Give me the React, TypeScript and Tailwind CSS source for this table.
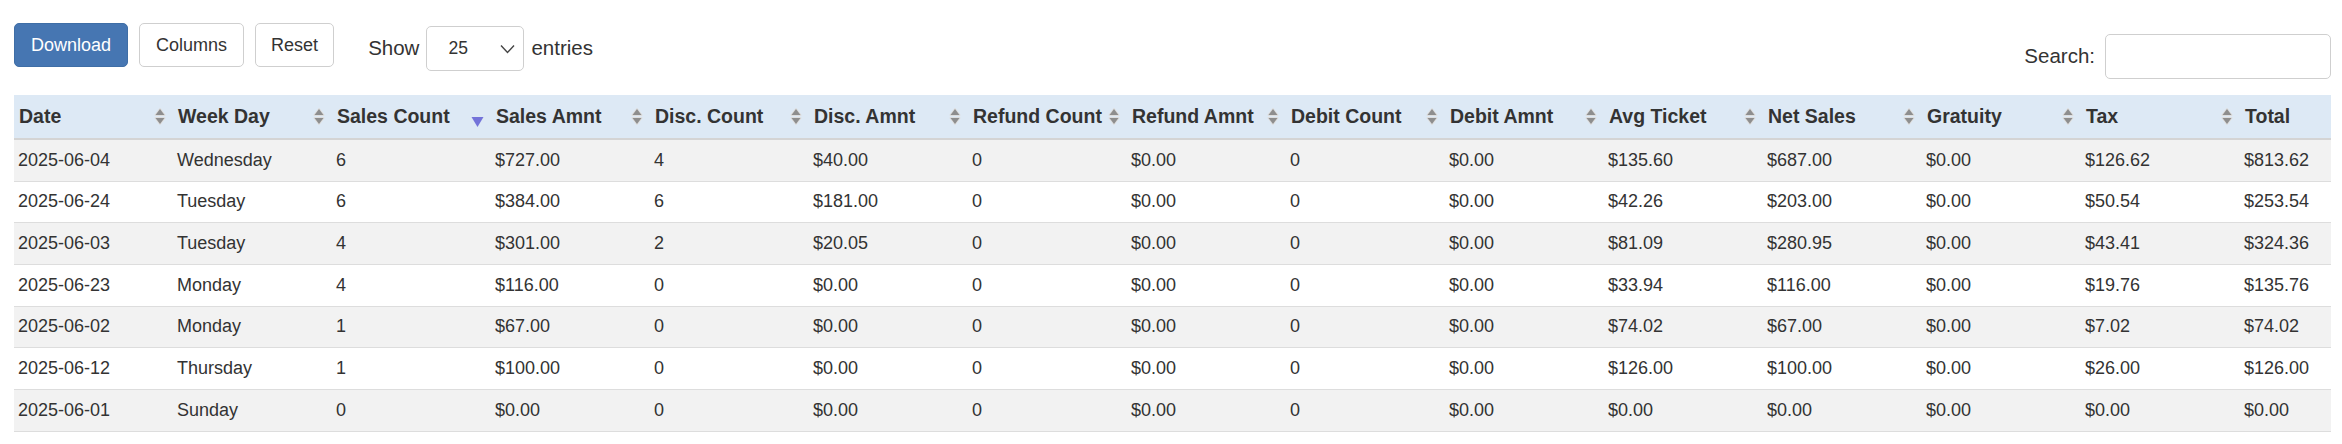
import React from "react";

const columns = [
  "Date",
  "Week Day",
  "Sales Count",
  "Sales Amnt",
  "Disc. Count",
  "Disc. Amnt",
  "Refund Count",
  "Refund Amnt",
  "Debit Count",
  "Debit Amnt",
  "Avg Ticket",
  "Net Sales",
  "Gratuity",
  "Tax",
  "Total",
];

const rows = [
  ["2025-06-04", "Wednesday", "6", "$727.00", "4", "$40.00", "0", "$0.00", "0", "$0.00", "$135.60", "$687.00", "$0.00", "$126.62", "$813.62"],
  ["2025-06-24", "Tuesday", "6", "$384.00", "6", "$181.00", "0", "$0.00", "0", "$0.00", "$42.26", "$203.00", "$0.00", "$50.54", "$253.54"],
  ["2025-06-03", "Tuesday", "4", "$301.00", "2", "$20.05", "0", "$0.00", "0", "$0.00", "$81.09", "$280.95", "$0.00", "$43.41", "$324.36"],
  ["2025-06-23", "Monday", "4", "$116.00", "0", "$0.00", "0", "$0.00", "0", "$0.00", "$33.94", "$116.00", "$0.00", "$19.76", "$135.76"],
  ["2025-06-02", "Monday", "1", "$67.00", "0", "$0.00", "0", "$0.00", "0", "$0.00", "$74.02", "$67.00", "$0.00", "$7.02", "$74.02"],
  ["2025-06-12", "Thursday", "1", "$100.00", "0", "$0.00", "0", "$0.00", "0", "$0.00", "$126.00", "$100.00", "$0.00", "$26.00", "$126.00"],
  ["2025-06-01", "Sunday", "0", "$0.00", "0", "$0.00", "0", "$0.00", "0", "$0.00", "$0.00", "$0.00", "$0.00", "$0.00", "$0.00"],
];

// gray up/down pair, unsorted column
function SortBoth() {
  return (
    <svg width="12" height="20" viewBox="0 0 12 20" className="shrink-0">
      <g stroke="#dedede" strokeWidth="2" strokeLinejoin="round" fill="#8e8e8e" paintOrder="stroke">
        <path d="M6 2 L10.5 8 L1.5 8 Z" />
        <path d="M1.5 11 L10.5 11 L6 17 Z" />
      </g>
    </svg>
  );
}

// single blue triangle, sorted descending
function SortDesc() {
  return (
    <svg width="13" height="20" viewBox="0 0 13 20" className="shrink-0">
      <path d="M0.5 10 L12.5 10 L6.5 20 Z" fill="#7373d9" />
    </svg>
  );
}

export default function App() {
  return (
    <div className="min-h-screen bg-white pl-[14px] pr-[11px] pt-[23px] font-['Liberation_Sans',Arial,sans-serif] text-[#333]">
      {/* toolbar */}
      <div className="flex items-start justify-between">
        <div className="flex items-start">
          <button className="h-[44px] rounded-[5px] border border-[#3f6ea6] bg-[#4676b2] px-[16px] text-[18px] text-white">
            Download
          </button>
          <button className="ml-[11px] h-[44px] rounded-[5px] border border-[#cfcfcf] bg-white px-[16px] text-[18px]">
            Columns
          </button>
          <button className="ml-[11px] h-[44px] rounded-[5px] border border-[#cfcfcf] bg-white px-[15px] text-[18px]">
            Reset
          </button>
          <div className="ml-[34px] mt-[3px] flex items-center gap-[7px] text-[20.5px]">
            <span>Show</span>
            <div className="flex h-[45px] w-[98px] items-center justify-between rounded-[5px] border border-[#cfcfcf] pl-[21px] pr-[8px] text-[17.5px]">
              <span>25</span>
              <svg width="15" height="10" viewBox="0 0 15 10">
                <path d="M1 1.5 L7.5 8.5 L14 1.5" fill="none" stroke="#444" strokeWidth="1.4" />
              </svg>
            </div>
            <span>entries</span>
          </div>
        </div>
        <div className="mt-[11px] flex items-center gap-[10px] text-[20.5px]">
          <span>Search:</span>
          <input className="h-[45px] w-[226px] rounded-[5px] border border-[#cfcfcf] outline-none" />
        </div>
      </div>

      {/* table */}
      <div className="mt-[16px] overflow-hidden">
        <table className="w-[2385px] table-fixed border-separate border-spacing-0">
          <colgroup>
            {columns.map((c) => (
              <col key={c} className="w-[159px]" />
            ))}
          </colgroup>
          <thead>
            <tr className="bg-[#dde9f5]">
              {columns.map((c, i) => (
                <th
                  key={c}
                  className="h-[45px] border-b-2 border-[#d4d4d4] p-0 pl-[5px] pr-[7px] text-left text-[19.5px] font-bold"
                >
                  <div className="flex items-center justify-between">
                    <span className="whitespace-nowrap">{c}</span>
                    {i === 2 ? <SortDesc /> : <SortBoth />}
                  </div>
                </th>
              ))}
            </tr>
          </thead>
          <tbody>
            {rows.map((r, ri) => (
              <tr key={ri} className={ri % 2 === 0 ? "bg-[#f2f2f2]" : "bg-white"}>
                {r.map((v, ci) => (
                  <td
                    key={ci}
                    className="h-[41.67px] border-b border-[#dddddd] p-0 pl-[4px] text-[18px] whitespace-nowrap"
                  >
                    {v}
                  </td>
                ))}
              </tr>
            ))}
          </tbody>
        </table>
      </div>
    </div>
  );
}
